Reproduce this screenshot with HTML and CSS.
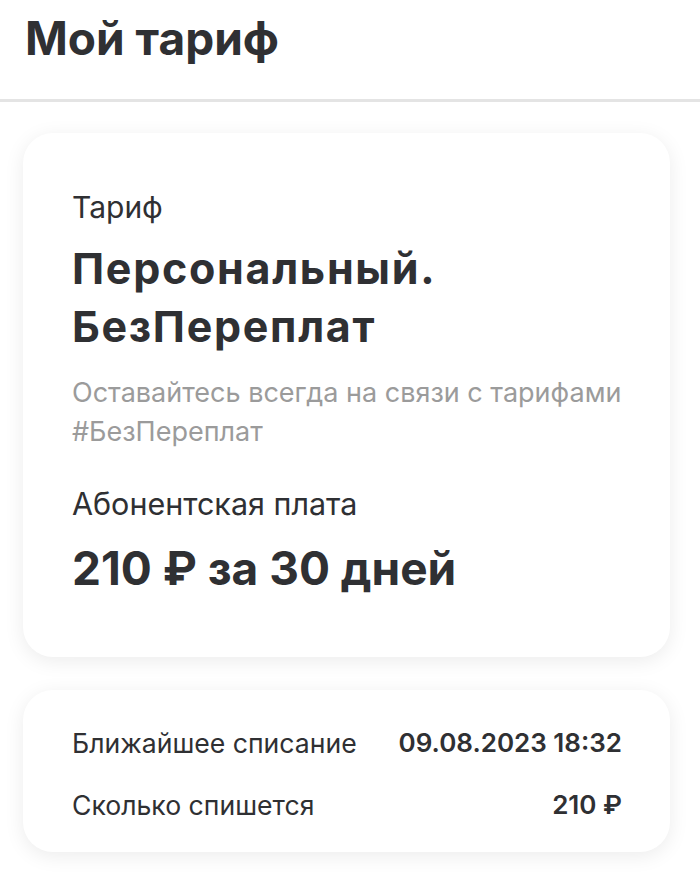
FILE: index.html
```html
<!DOCTYPE html>
<html lang="ru">
<head>
    <meta charset="UTF-8">
    <meta name="viewport" content="width=device-width, initial-scale=1.0">
    <title>Мой тариф</title>
    <link rel="stylesheet" href="styles.css">
</head>
<body>

    <header class="page-header">
        <h1>Мой тариф</h1>
    </header>

    <main class="content">
        <!-- Карточка тарифа -->
        <section class="card tariff-card">
            <div class="label">Тариф</div>
            <h2 class="tariff-name">Персональный. БезПереплат</h2>
            <p class="tariff-desc">Оставайтесь всегда на связи с тарифами #БезПереплат</p>
            <div class="label fee-label">Абонентская плата</div>
            <div class="fee">210 ₽ за 30 дней</div>
        </section>

        <!-- Списание -->
        <section class="card charge-card">
            <div class="row">
                <span>Ближайшее списание</span>
                <span class="value">09.08.2023 18:32</span>
            </div>
            <div class="row">
                <span>Сколько спишется</span>
                <span class="value">210 ₽</span>
            </div>
        </section>
    </main>

</body>
</html>
```

FILE: styles.css
```css
/* Basis */
body {
    margin: 0;
    font-family: Inter, "Noto Sans", sans-serif;
    color: #2f3033;
    background: #fff;
}

.page-header {
    border-bottom: 3px solid #e4e4e4;
    padding: 11px 25px 33px;
}

.page-header h1 {
    margin: 0;
    font-size: 46px;
    font-weight: 700;
    line-height: 55px;
}

.content {
    padding: 31px 30px 20px 23px;
    display: flex;
    flex-direction: column;
    gap: 33px;
}

/* Karten */
.card {
    background: #fff;
    border-radius: 30px;
    box-shadow: 0 4px 20px rgba(0, 0, 0, 0.08);
    padding: 0 48px 0 49px;
}

.tariff-card {
    padding-top: 56px;
    padding-bottom: 62px;
}

.label {
    font-size: 30px;
    line-height: 36px;
}

.tariff-name {
    margin: 14px 0 0;
    font-size: 43px;
    font-weight: 700;
    line-height: 58px;
    letter-spacing: 1.7px;
    max-width: 440px;
}

.tariff-desc {
    margin: 18px 0 0;
    font-size: 27px;
    line-height: 39px;
    color: #9b9b9b;
}

.fee-label {
    margin-top: 35px;
    font-size: 30.5px;
}

.fee {
    margin-top: 19px;
    font-size: 46px;
    font-weight: 700;
    line-height: 54px;
}

.charge-card {
    padding-top: 35px;
    padding-bottom: 29px;
}

.row {
    display: flex;
    justify-content: space-between;
    font-size: 26.6px;
    line-height: 36px;
}

.row + .row {
    margin-top: 26px;
}

.row .value {
    font-size: 26px;
    font-weight: 600;
}
```
